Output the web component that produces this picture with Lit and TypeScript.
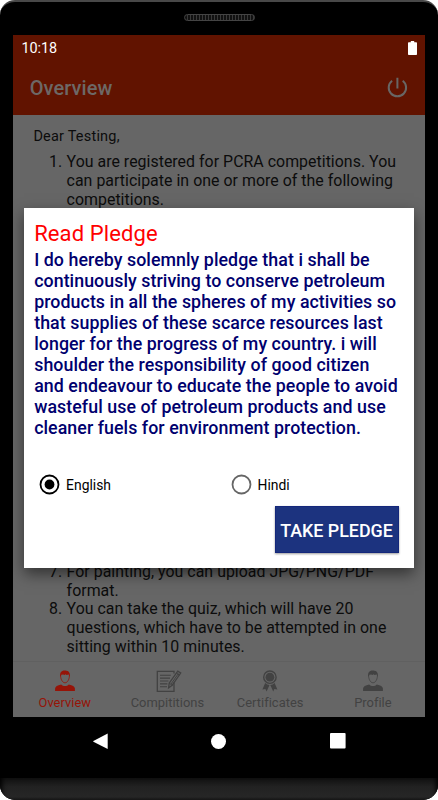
import { LitElement, html, css, svg } from "lit";
import { customElement, state } from "lit/decorators.js";

const person = svg`
  <path d="M6.6 5C6.4 8.6 8.2 12.8 11 12.8S15.6 8.6 15.4 5" fill="none" stroke="currentColor" stroke-width=".8"/>
  <path d="M6.4 7C5.2 3 7.4.3 10.8.4C14.6 .1 16.8 3 15.6 7L14.8 4.6L12.6 4.9L11.6 4.3L10.4 4.9L9.2 4.4L7.4 4.7Z" fill="currentColor"/>
  <path d="M1.1 21V18.6C1.2 16.4 3.4 15.2 7.2 14.4C9.2 16.4 12.8 16.4 14.8 14.4C18.6 15.2 20.8 16.4 20.9 18.6V21Z" fill="currentColor"/>`;

const notes = svg`
  <g fill="none" stroke="currentColor">
    <path d="M18 3.6V1.3H1.3V21.3H18V12.6" stroke-width="1.3"/>
    <path d="M4 5.2H14.8M4 8.1H14M4 11H12.4M4 13.9H11.4M4 16.8H11" stroke-width="1.1"/>
    <path d="M13.2 13.2L21.8 1.1L24.7 3L16.2 15.2L12.6 17.8Z" stroke-width="1.3"/>
    <path d="M13.2 13.2L16.2 15.2M20.4 3L23.3 5M15 14L22.4 3.6" stroke-width="1"/>
  </g>`;

const rosette = svg`
  <circle cx="7.9" cy="7.2" r="6.2" fill="none" stroke="currentColor" stroke-width="1.4"/>
  <circle cx="7.9" cy="7.2" r="4.4" fill="currentColor"/>
  <path d="M3.2 13L.4 19.4L3.4 18.9L4.6 21.4L7.5 15Q5 14.8 3.2 13ZM12.6 13L15.4 19.4L12.4 18.9L11.2 21.4L8.3 15Q10.8 14.8 12.6 13Z" fill="currentColor"/>`;

const tabs = [
  { label: "Overview", icon: person, width: 22, cls: "active" },
  { label: "Compititions", icon: notes, width: 26, cls: "outline" },
  { label: "Certificates", icon: rosette, width: 16, cls: "" },
  { label: "Profile", icon: person, width: 22, cls: "" },
];

const topRules = [
  { n: "1.", lines: ["You are registered for PCRA competitions. You", "can participate in one or more of the following", "competitions."] },
];
const bottomRules = [
  { n: "7.", lines: ["For painting, you can upload JPG/PNG/PDF", "format."] },
  { n: "8.", lines: ["You can take the quiz, which will have 20", "questions, which have to be attempted in one", "sitting within 10 minutes."] },
];
const pledge = [
  "I do hereby solemnly pledge that i shall be",
  "continuously striving to conserve petroleum",
  "products in all the spheres of my activities so",
  "that supplies of these scarce resources last",
  "longer for the progress of my country. i will",
  "shoulder the responsibility of good citizen",
  "and endeavour to educate the people to avoid",
  "wasteful use of petroleum products and use",
  "cleaner fuels for environment protection.",
];

@customElement("app-root")
export class AppRoot extends LitElement {
  @state() private language = "English";

  static styles = css`
    :host { display: block; width: 438px; height: 800px; background: #fff; font-family: Roboto, sans-serif; }
    * { box-sizing: border-box; }
    .phone { width: 438px; height: 800px; background: #000; border-radius: 15px; overflow: hidden; display: flex; flex-direction: column; border-top: 2px solid #484848; position: relative; }
    .ear { height: 33px; flex: none; display: flex; justify-content: center; padding-top: 12px; }
    .speaker { width: 71px; height: 7px; border-radius: 4px; border: 1px solid #444; background: repeating-linear-gradient(90deg, #111 0 2px, #393939 2px 3px); }
    .screen { margin: 0 13px 0 13.4px; height: 682.3px; flex: none; background: #666; display: flex; flex-direction: column; }
    .top { height: 80px; background: #611300; flex: none; }
    .status { height: 26px; padding: 0 8px 0 8.2px; display: flex; justify-content: space-between; align-items: center; color: #fff; font-size: 14.4px; letter-spacing: -.1px; }
    .appbar { height: 54px; padding: 0 17.4px 0 16.4px; display: flex; justify-content: space-between; align-items: center; color: #6d6866; font-size: 20px; font-weight: 500; letter-spacing: .05px; }
    .appbar svg { margin-top: -1px; }
    .body { flex: 1; display: flex; flex-direction: column; color: #0c0c0c; font-size: 15.9px; line-height: 18.65px; letter-spacing: .03px; padding-top: 12.6px; overflow: hidden; white-space: nowrap; }
    .greet { font-size: 14.5px; line-height: 17px; padding-left: 20px; letter-spacing: .2px; margin-bottom: 8.8px; }
    .rule { display: flex; }
    .num { width: 53.2px; padding-right: 4.4px; text-align: right; }
    .gap { height: 353.7px; flex: none; }
    .tabs { height: 56.6px; flex: none; border-top: 1px solid #606060; display: flex; color: #424242; padding-right: .8px; }
    .tab { flex: 1; display: flex; flex-direction: column; align-items: center; padding-top: 8.2px; font-size: 12.9px; line-height: 15px; letter-spacing: .02px; }
    .tab svg { margin-bottom: 3.2px; flex: none; }
    .active { color: #961408; }
    .outline svg { margin-left: 3px; }
    .nav { height: 48px; display: flex; justify-content: center; align-items: center; gap: 103.5px; flex: none; }
    .chin { margin-top: auto; height: 22px; background: linear-gradient(#101010, #222 40%, #262626 85%, #181818); box-shadow: inset 6px 0 5px -4px #000, inset -6px 0 5px -4px #000; }
    .dialog { position: absolute; left: 24px; top: 206px; width: 390px; height: 360px; background: #fff; box-shadow: 0 6px 14px rgba(0,0,0,.5); padding: 12px 15px 15px 10.2px; display: flex; flex-direction: column; white-space: nowrap; }
    .title { color: #f00; font-size: 22px; line-height: 27px; letter-spacing: .1px; }
    .text { color: #00006e; font-size: 17.8px; font-weight: 500; line-height: 20.9px; letter-spacing: .06px; margin-top: 3.4px; }
    .radios { display: flex; margin: 35.2px 0 0 5.2px; height: 22px; font-size: 13.9px; color: #000; }
    .radio { width: 191.5px; flex: none; display: flex; align-items: center; gap: 5.7px; }
    .button { margin: auto 0 0 auto; width: 124px; height: 47.5px; flex: none; background: #1c337f; border: 1px solid #14277b; color: #fff; font: 500 17.9px Roboto, sans-serif; padding: 2px 1px 0 0; letter-spacing: -.02px; box-shadow: 0 1px 2px rgba(0,0,0,.4); }
  `;

  private rule(r: { n: string; lines: string[] }) {
    return html`<div class="rule"><div class="num">${r.n}</div><div>${r.lines.map((l) => html`<div>${l}</div>`)}</div></div>`;
  }

  private radio(name: string) {
    const on = this.language === name;
    return html`<div class="radio" @click=${() => (this.language = name)}>
      <svg width="21" height="21" viewBox="0 0 21 21">
        <circle cx="10.5" cy="10.5" r="9" fill="none" stroke=${on ? "#000" : "#666"} stroke-width="1.8"></circle>
        ${on ? svg`<circle cx="10.5" cy="10.5" r="4.9"/>` : ""}
      </svg><span>${name}</span></div>`;
  }

  render() {
    return html`<div class="phone">
      <div class="ear"><div class="speaker"></div></div>
      <div class="screen">
        <div class="top">
          <div class="status"><span>10:18</span>
            <svg width="9" height="14" viewBox="0 0 9 14"><path d="M0 2Q0 1.2.8 1.2H2.8V0H6.2V1.2H8.2Q9 1.2 9 2V13.2Q9 14 8.2 14H.8Q0 14 0 13.2Z" fill="#fff"/></svg>
          </div>
          <div class="appbar"><span>Overview</span>
            <svg width="21" height="21" viewBox="0 0 21 21" fill="none" stroke="#686664" stroke-width="2"><path d="M10.4.8V11.4M5.1 3.7A8.7 8.7 0 1 0 15.7 3.7"/></svg>
          </div>
        </div>
        <div class="body">
          <div class="greet">Dear Testing,</div>
          ${topRules.map((r) => this.rule(r))}
          <div class="gap"></div>
          ${bottomRules.map((r) => this.rule(r))}
        </div>
        <div class="tabs">${tabs.map((t) => html`<div class="tab ${t.cls}">
          <svg width=${t.width} height="22" viewBox="0 0 ${t.width} 22">${t.icon}</svg><span>${t.label}</span></div>`)}
        </div>
      </div>
      <div class="nav">
        <svg width="15" height="17" viewBox="0 0 15 17"><path d="M14.7.5V16L.4 8.7Q0 8.3.4 7.9Z" fill="#fff"/></svg>
        <svg width="15" height="15" viewBox="0 0 15 15"><circle cx="7.5" cy="7.5" r="7.5" fill="#fff"/></svg>
        <svg width="16" height="16" viewBox="0 0 16 16"><rect width="15.6" height="15.6" rx="1" fill="#fff"/></svg>
      </div>
      <div class="chin"></div>
      <div class="dialog">
        <div class="title">Read Pledge</div>
        <div class="text">${pledge.map((l) => html`<div>${l}</div>`)}</div>
        <div class="radios">${this.radio("English")}${this.radio("Hindi")}</div>
        <button class="button">TAKE PLEDGE</button>
      </div>
    </div>`;
  }
}
